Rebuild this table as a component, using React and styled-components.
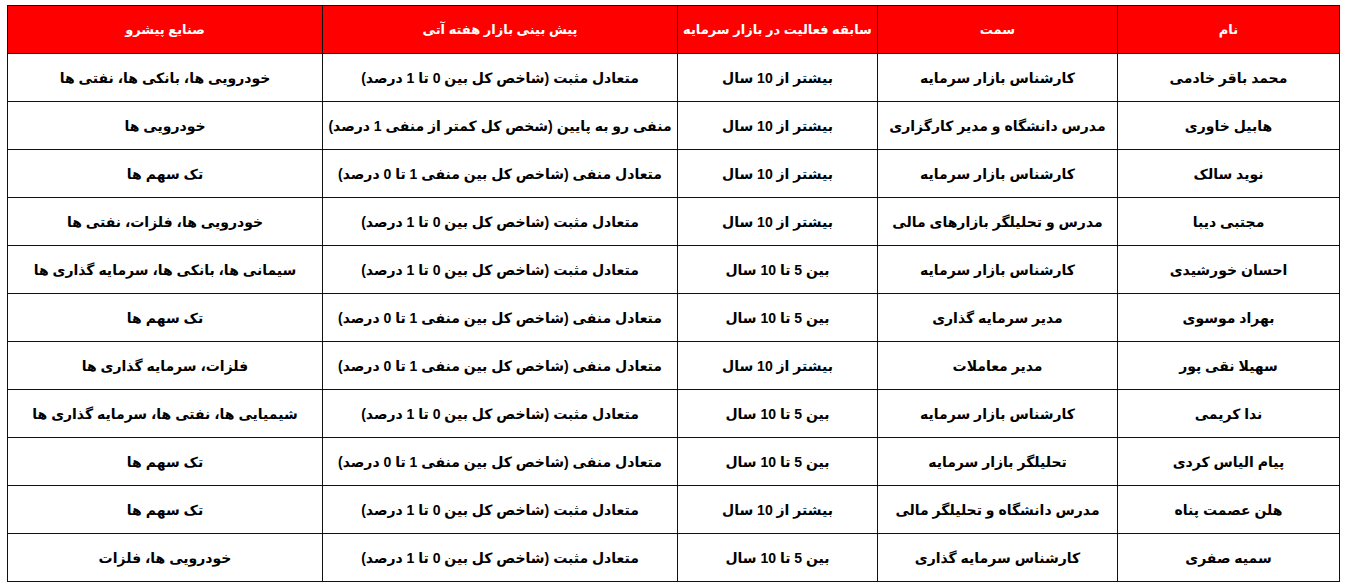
import React from 'react';
import styled, { createGlobalStyle } from 'styled-components';

const GlobalStyle = createGlobalStyle`
  html, body {
    margin: 0;
    padding: 0;
    background: #ffffff;
  }
  body {
    font-family: "Liberation Sans", "DejaVu Sans", Arial, sans-serif;
  }
`;

const Sheet = styled.div`
  padding: 5px 0 0 8px;
  direction: rtl;
  width: 1332px;
  box-sizing: content-box;
`;

const Table = styled.table`
  width: 1332px;
  border-collapse: collapse;
  table-layout: fixed;
  direction: rtl;
`;

const HeadCell = styled.th`
  height: 47px;
  padding: 0 2px;
  background: #ff0000;
  color: #ffffff;
  font-size: 13px;
  font-weight: bold;
  text-align: center;
  border: 1px solid #111111;
  white-space: nowrap;
  overflow: hidden;
`;

const Cell = styled.td`
  height: 47px;
  padding: 0 4px;
  color: #000000;
  font-size: 14px;
  font-weight: bold;
  text-align: center;
  border: 1px solid #111111;
  white-space: nowrap;
`;

// widths in reading order (right to left)
const columns = [
  { title: 'نام', width: 222 },
  { title: 'سمت', width: 240 },
  { title: 'سابقه فعالیت در بازار سرمایه', width: 200 },
  { title: 'پیش بینی بازار هفته آتی', width: 355 },
  { title: 'صنایع پیشرو', width: 315 },
];

const positive = 'متعادل مثبت (شاخص کل بین 0 تا 1 درصد)';
const negative = 'متعادل منفی (شاخص کل بین  منفی 1 تا 0 درصد)';
const over10 = 'بیشتر از 10 سال';
const from5 = 'بین 5 تا 10 سال';

const rows = [
  ['محمد باقر خادمی', 'کارشناس بازار سرمایه', over10, positive, 'خودرویی ها، بانکی ها، نفتی ها'],
  ['هابیل خاوری', 'مدرس دانشگاه و مدیر کارگزاری', over10, 'منفی رو به پایین (شخص کل کمتر از منفی 1 درصد)', 'خودرویی ها'],
  ['نوید سالک', 'کارشناس بازار سرمایه', over10, negative, 'تک سهم ها'],
  ['مجتبی دیبا', 'مدرس و تحلیلگر بازارهای مالی', over10, positive, 'خودرویی ها، فلزات، نفتی ها'],
  ['احسان خورشیدی', 'کارشناس بازار سرمایه', from5, positive, 'سیمانی ها، بانکی ها، سرمایه گذاری ها'],
  ['بهراد موسوی', 'مدیر سرمایه گذاری', from5, negative, 'تک سهم ها'],
  ['سهیلا نقی پور', 'مدیر معاملات', over10, negative, 'فلزات، سرمایه گذاری ها'],
  ['ندا کریمی', 'کارشناس بازار سرمایه', from5, positive, 'شیمیایی ها، نفتی ها، سرمایه گذاری ها'],
  ['پیام الیاس کردی', 'تحلیلگر بازار سرمایه', from5, 'متعادل منفی (شاخص کل بین منفی 1 تا 0 درصد)', 'تک سهم ها'],
  ['هلن عصمت پناه', 'مدرس دانشگاه و تحلیلگر مالی', over10, positive, 'تک سهم ها'],
  ['سمیه صفری', 'کارشناس سرمایه گذاری', from5, positive, 'خودرویی ها، فلزات'],
];

const App = () => {
  return (
    <>
      <GlobalStyle />
      <Sheet>
        <Table>
          <colgroup>
            {columns.map((c) => (
              <col key={c.title} style={{ width: c.width }} />
            ))}
          </colgroup>
          <thead>
            <tr>
              {columns.map((c) => (
                <HeadCell key={c.title}>{c.title}</HeadCell>
              ))}
            </tr>
          </thead>
          <tbody>
            {rows.map((row) => (
              <tr key={row[0]}>
                {row.map((value, i) => (
                  <Cell key={i} dir="rtl">{value}</Cell>
                ))}
              </tr>
            ))}
          </tbody>
        </Table>
      </Sheet>
    </>
  );
};

export default App;
